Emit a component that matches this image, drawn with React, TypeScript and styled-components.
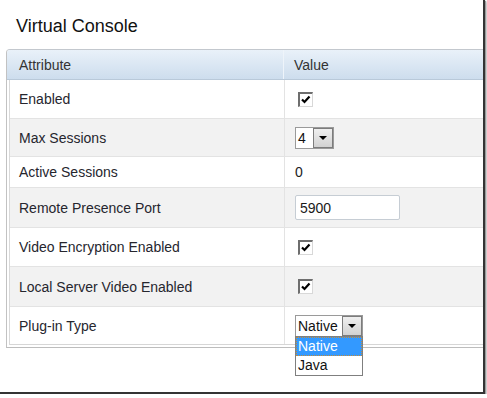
import React from 'react';
import styled, { createGlobalStyle } from 'styled-components';

const Global = createGlobalStyle`
  html, body { margin: 0; padding: 0; background: #fff; }
  body { font-family: Arial, "Liberation Sans", sans-serif; }
  * { box-sizing: border-box; }
`;

const Frame = styled.div`
  position: relative;
  width: 485px;
  height: 394px;
  border-right: 2px solid #343434;
  border-bottom: 2px solid #343434;
  box-shadow: 1px 1px 1px #9a9a9a, 2px 2px 2px #c8c8c8;
  overflow: hidden;
  background: #fff;
`;

const Title = styled.h1`
  margin: 15px 0 0 16px;
  font-size: 18px;
  line-height: 22px;
  font-weight: normal;
  color: #111;
  font-family: "Liberation Sans", Arial, sans-serif;
`;

const Panel = styled.div`
  margin: 12px -12px 0 6px;
  border-top: 1px solid #c3c8ce;
  border-left: 1px solid #c2c2c2;
  border-bottom: 1px solid #bdbdbd;
  border-top-left-radius: 4px;
  padding-bottom: 2px;
  font-family: "Liberation Sans", Arial, sans-serif;
  font-size: 14px;
  color: #26262e;
`;

const HeaderRow = styled.div`
  display: grid;
  grid-template-columns: 277px 1fr;
  height: 30px;
  background: linear-gradient(#e9f1f9, #cddded);
  border-bottom: 1px solid #b9c9d9;
  border-top-left-radius: 3px;
`;

const HeaderCell = styled.div<{ $divider?: boolean }>`
  display: flex;
  align-items: center;
  padding-left: ${(p) => (p.$divider ? '12px' : '10px')};
  border-right: ${(p) => (p.$divider ? '1px solid #eef4fa' : 'none')};
  color: #333;
`;

const Body = styled.div`
  margin-left: 2px;
  border-left: 1px solid #d9d9d9;
  border-bottom: 1px solid #d6d6d6;
`;

const Row = styled.div<{ $h: number; $alt: boolean; $last?: boolean }>`
  display: grid;
  grid-template-columns: 275px 1fr;
  height: ${(p) => p.$h}px;
  background: ${(p) => (p.$alt ? '#f2f2f2' : '#fff')};
  border-bottom: ${(p) => (p.$last ? 'none' : '1px solid #e3e3e3')};
`;

const LabelCell = styled.div`
  display: flex;
  align-items: center;
  padding-left: 9px;
  border-right: 1px solid #e3e3e3;
`;

const ValueCell = styled.div`
  position: relative;
  display: flex;
  align-items: center;
  padding-left: 10px;
`;

const CheckBox = styled.span`
  display: inline-block;
  width: 15px;
  height: 15px;
  margin-left: 3px;
  background: #fff;
  border-top: 2px solid #6e6e6e;
  border-left: 2px solid #6e6e6e;
  border-right: 1px solid #d8d8d8;
  border-bottom: 1px solid #d8d8d8;
  position: relative;
  svg { position: absolute; left: 0; top: 0; }
`;

const SelectBox = styled.div<{ $w: number }>`
  display: flex;
  width: ${(p) => p.$w}px;
  height: 22px;
  border: 1px solid #9a9a9a;
  background: #fff;
  font-size: 14px;
  color: #111;
`;

const SelectText = styled.span`
  flex: 1;
  display: flex;
  align-items: center;
  padding-left: 2px;
`;

const ArrowBtn = styled.span`
  width: 20px;
  height: 100%;
  border: 1px solid #7c7c7c;
  background: linear-gradient(#efefef, #d2d2d2);
  display: flex;
  align-items: center;
  justify-content: center;
  &::after {
    content: '';
    border-left: 4px solid transparent;
    border-right: 4px solid transparent;
    border-top: 4px solid #000;
  }
`;

const TextInput = styled.div`
  width: 105px;
  height: 25px;
  border: 1px solid #c6cdd4;
  border-radius: 2px;
  display: flex;
  align-items: center;
  padding-left: 4px;
  color: #1a1a1a;
  background: #fff;
`;

const Plain = styled.span`
  color: #222;
`;

const DropList = styled.div`
  position: absolute;
  left: 10px;
  top: 29px;
  width: 68px;
  border: 1px solid #7f7f7f;
  background: #fff;
  z-index: 2;
  font-size: 14px;
`;

const Option = styled.div<{ $sel?: boolean }>`
  height: 19px;
  line-height: 18px;
  padding-left: 2px;
  color: ${(p) => (p.$sel ? '#fff' : '#111')};
  background: ${(p) => (p.$sel ? '#3399ff' : '#fff')};
  outline: ${(p) => (p.$sel ? '1px dotted #c08a3a' : 'none')};
  outline-offset: -1px;
`;

const Check = () => (
  <CheckBox>
    <svg width="12" height="12" viewBox="0 0 12 12">
      <path d="M2 5.5 L4.5 8 L9.5 2.5" fill="none" stroke="#000" strokeWidth="2.2" />
    </svg>
  </CheckBox>
);

type Kind = 'check' | 'sel4' | 'text' | 'input' | 'plugin';
const rows: { label: string; h: number; kind: Kind }[] = [
  { label: 'Enabled', h: 39, kind: 'check' },
  { label: 'Max Sessions', h: 38, kind: 'sel4' },
  { label: 'Active Sessions', h: 31, kind: 'text' },
  { label: 'Remote Presence Port', h: 40, kind: 'input' },
  { label: 'Video Encryption Enabled', h: 39, kind: 'check' },
  { label: 'Local Server Video Enabled', h: 40, kind: 'check' },
  { label: 'Plug-in Type', h: 37, kind: 'plugin' },
];

const renderValue = (k: Kind) => {
  switch (k) {
    case 'check':
      return <Check />;
    case 'sel4':
      return (
        <SelectBox $w={39}>
          <SelectText>4</SelectText>
          <ArrowBtn />
        </SelectBox>
      );
    case 'text':
      return <Plain>0</Plain>;
    case 'input':
      return <TextInput>5900</TextInput>;
    case 'plugin':
      return (
        <>
          <SelectBox $w={68}>
            <SelectText>Native</SelectText>
            <ArrowBtn />
          </SelectBox>
          <DropList>
            <Option $sel>Native</Option>
            <Option>Java</Option>
          </DropList>
        </>
      );
  }
};

export default function App() {
  return (
    <>
      <Global />
      <Frame>
        <Title>Virtual Console</Title>
        <Panel>
          <HeaderRow>
            <HeaderCell $divider>Attribute</HeaderCell>
            <HeaderCell>Value</HeaderCell>
          </HeaderRow>
          <Body>
            {rows.map((r, i) => (
              <Row key={r.label} $h={r.h} $alt={i % 2 === 1} $last={i === rows.length - 1}>
                <LabelCell>{r.label}</LabelCell>
                <ValueCell>{renderValue(r.kind)}</ValueCell>
              </Row>
            ))}
          </Body>
        </Panel>
      </Frame>
    </>
  );
}
